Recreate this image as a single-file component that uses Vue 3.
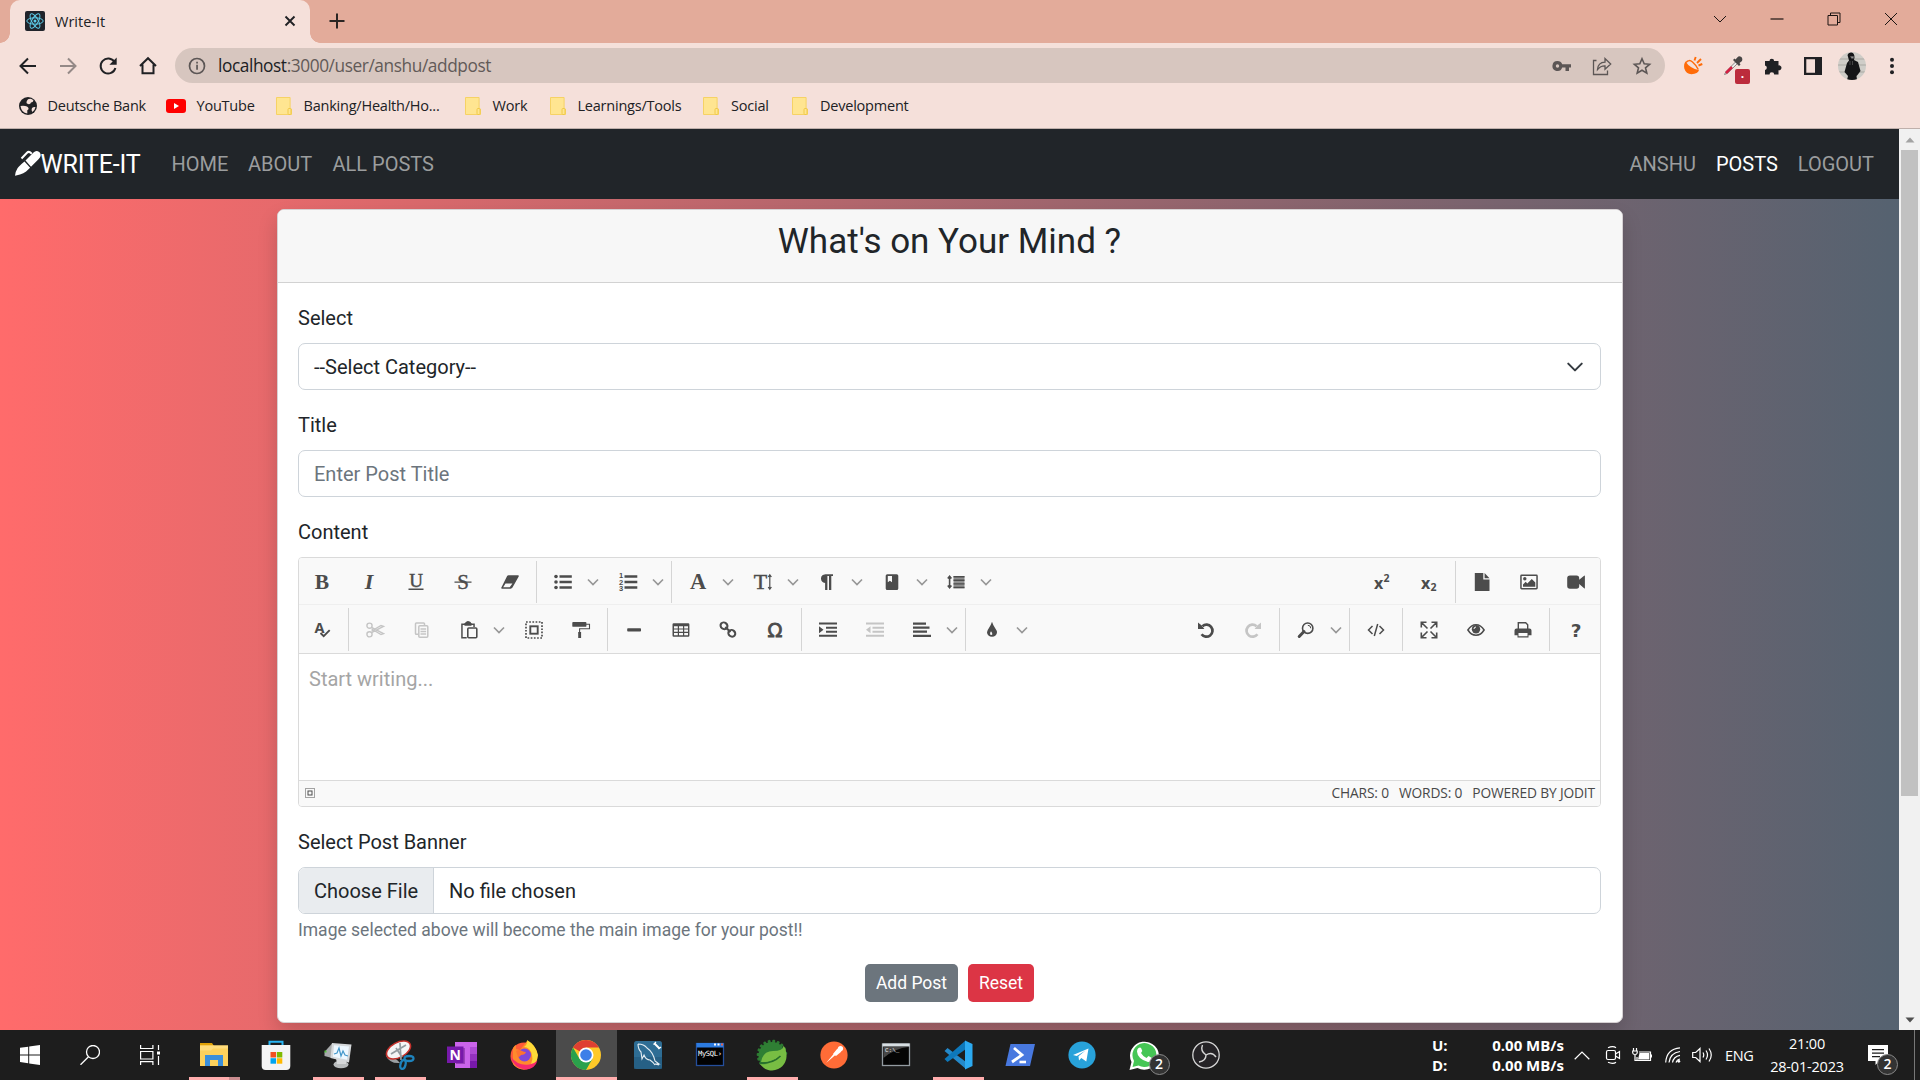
<script setup>
const bookmarks = [
  { label: 'Deutsche Bank', icon: 'globe', width: 148, gap: 9.5 },
  { label: 'YouTube', icon: 'youtube', width: 110, gap: 10.5 },
  { label: 'Banking/Health/Ho...', icon: 'folder', width: 189, gap: 11.5 },
  { label: 'Work', icon: 'folder', width: 85, gap: 11.5 },
  { label: 'Learnings/Tools', icon: 'folder', width: 153, gap: 11.5 },
  { label: 'Social', icon: 'folder', width: 89, gap: 12 },
  { label: 'Development', icon: 'folder', width: 120, gap: 12 },
]

const serif = 'font-family="Liberation Serif, serif" text-anchor="middle"'
const icons = {
  bold: `<text x="9" y="15.6" ${serif} font-size="21.5" font-weight="700">B</text>`,
  italic: `<text x="9" y="15.6" ${serif} font-size="22" font-weight="700" font-style="italic">I</text>`,
  underline: `<text x="9" y="13.6" ${serif} font-size="19" stroke="currentColor" stroke-width=".5">U</text><path d="M1.5 15.6h15v1.3h-15z"/>`,
  strike: `<text x="9" y="15.6" ${serif} font-size="21" stroke="currentColor" stroke-width=".4">S</text><path d="M.5 8.6h17v1.2H.5z"/>`,
  eraser: '<path d="M7.5 2.2h9.4q1.4 0 .8 1.3L11.5 14.600q-.7 1.100-1.800 1.100H1.200q-1.500-.1-.8-1.300L6 3.200q.5-1 1.500-1zM2.200 14.300h6.500l2.700-3.700H4.500z" fill-rule="evenodd"/>',
  ul: '<circle cx="2" cy="3.500" r="1.800"/><circle cx="2" cy="9" r="1.800"/><circle cx="2" cy="14.500" r="1.800"/><path d="M5.500 2.200h12.300v2.600H5.500zM5.500 7.700h12.300v2.600H5.500zM5.500 13.200h12.300v2.600H5.500z"/>',
  ol: '<path d="M5.500 2.200h12.800v2.600H5.500zM5.500 7.700h12.800v2.600H5.500zM5.500 13.200h12.800v2.600H5.500z"/><g font-family="Liberation Sans" font-size="7.500" font-weight="700"><text x="0" y="5">1</text><text x="0" y="11.500">2</text><text x="0" y="18">3</text></g>',
  font: `<text x="9" y="16" ${serif} font-size="22.500" font-weight="700">A</text>`,
  fontsize: `<text x="6.500" y="16" ${serif} font-size="22" stroke="currentColor" stroke-width=".5">T</text><path d="M15.800 2.500v13M14.200 4l1.600-2.300L17.400 4M14.200 14l1.600 2.300 1.600-2.300" stroke="currentColor" stroke-width="1.200" fill="none"/>`,
  paragraph: '<path d="M15 1.200v1.700h-1.700V17H11V2.900H9.400V17H7.100V10Q3 9.600 3 5.600T7.500 1.200z"/>',
  background: '<path d="M4.300 1.200h9.400q1.600 0 1.600 1.600v12.600q0 1.600-1.600 1.600H4.300q-1.600 0-1.600-1.600V2.800q0-1.600 1.600-1.600zM4.800 3v6.200l2.100-1.500L9 9.200V3z" fill-rule="evenodd"/>',
  lineheight: '<path d="M6.500 3h11v12.200h-11z" opacity=".6"/><path d="M6.500 3h11v1.500h-11zM6.500 6.600h11v1.300h-11zM6.500 10.200h11v1.300h-11zM6.500 13.700h11v1.500h-11z"/><path d="M2.600 4v10M.8 5.600l1.800-2.300 1.800 2.300M.8 12.400l1.800 2.300 1.800-2.300" stroke="currentColor" stroke-width="1.600" fill="none"/>',
  sup: '<g font-family="Open Sans, sans-serif" font-weight="700"><text x="1" y="15.500" font-size="16">x</text><text x="10.500" y="8.500" font-size="10.500">2</text></g>',
  sub: '<g font-family="Open Sans, sans-serif" font-weight="700"><text x="1" y="15.500" font-size="16">x</text><text x="10.500" y="18" font-size="10.500">2</text></g>',
  file: '<path d="M1.800 0h8.500v6.500h6.200V18H1.800zM11.600 0l4.900 5.200h-4.900z"/>',
  image: '<path d="M1.600 1.500h14.800q1.400 0 1.400 1.400v12.200q0 1.400-1.400 1.400H1.600q-1.400 0-1.400-1.400V2.900q0-1.400 1.400-1.400zM1.700 3v12h14.600V3z" fill-rule="evenodd"/><circle cx="4.800" cy="5.700" r="1.700"/><path d="M3 13.700v-2.200l2.700-2.700L7.300 10.400l4.500-4.500L15.300 9.500v4.200z"/>',
  video: '<path d="M3 2.500h6.500q2.700 0 2.700 2.800v1.500l5.200-4.400q.5 0 .5.600v12q0 .6-.5.600L12.200 11v2q0 2.700-2.700 2.700H3Q.2 15.700.2 13V5.300Q.2 2.500 3 2.500z"/>',
  spell: '<text x="1.500" y="12.200" font-family="Open Sans, sans-serif" font-size="14.500" font-weight="700">A</text><path d="M7.500 12l3.200 3.200 6-6" fill="none" stroke="currentColor" stroke-width="1.900"/>',
  cut: '<g fill="none" stroke="currentColor" stroke-width="1.400"><circle cx="3.500" cy="4.700" r="2.600"/><circle cx="3.500" cy="13.300" r="2.600"/><path d="M5.500 6.300l12 6.400-2.500.8L5.600 8M5.500 11.700l12-6.400-2.500-.8L5.600 10"/></g>',
  copy: '<g fill="none" stroke="currentColor" stroke-width="1.500"><path d="M5.500 13.300H3.300q-.8 0-.8-.8V2.800q0-.8.800-.8h7.400q.8 0 .8.800V4"/><rect x="5.800" y="4.700" width="9" height="11.600" rx="1"/><path d="M7.500 8h5.600M7.500 10.500h5.600M7.500 13h5.600"/></g>',
  paste: '<path d="M1.200 2.500h3.300Q6.800-1 9 .3q1.800.4 2.500 2.200h3.300V6h-1.500V4H2.700v12h4v1.600H1.200z" fill-rule="evenodd"/><path d="M4.500 2.200h7v2.600h-7z"/><rect x="7.800" y="7" width="9" height="9.800" rx="1" fill="#f9f9f9" stroke="currentColor" stroke-width="1.600"/>',
  selectall: '<rect x="1" y="1" width="16" height="16" fill="none" stroke="currentColor" stroke-width="1.700" stroke-dasharray="1.700 1.500"/><rect x="5.300" y="5.300" width="7.400" height="7.400" fill="none" stroke="currentColor" stroke-width="1.900"/>',
  brush: '<path d="M.3 1.700Q.3.900 1.200.900H13.500q.9 0 .9.800v3.200q0 .9-.9.900H1.200q-.9 0-.9-.9zM6.200 11h2.900v6H6.200z"/><path d="M14 3.200h3.500v4.600H7.600V11" fill="none" stroke="currentColor" stroke-width="1.100"/>',
  hr: '<rect x="2.200" y="7.200" width="13.800" height="3.300" rx=".8"/>',
  table: '<path d="M1.700 2.300h14.500q1.200 0 1.200 1.200v11q0 1.200-1.200 1.200H1.700q-1.200 0-1.200-1.200v-11q0-1.200 1.200-1.200zM2 5.200v2.200h3.800V5.200zm5 0v2.200h4V5.200zm5.200 0v2.200H16V5.200zM2 8.600v2.200h3.800V8.600zm5 0v2.200h4V8.600zm5.200 0v2.200H16V8.600zM2 12v2.300h3.800V12zm5 0v2.300h4V12zm5.200 0v2.300H16V12z" fill-rule="evenodd"/>',
  link: '<g fill="none" stroke="currentColor" stroke-width="2.100"><ellipse cx="5" cy="4.800" rx="3.600" ry="3.200" transform="rotate(40 5 4.800)"/><ellipse cx="12.800" cy="12.300" rx="3.600" ry="3.200" transform="rotate(40 12.800 12.300)"/><path d="M6.300 6.100l5.200 5"/></g>',
  omega: '<text x="9" y="16" font-family="DejaVu Sans, sans-serif" font-size="19.500" stroke="currentColor" stroke-width=".8" text-anchor="middle">Ω</text>',
  indent: '<path d="M0 1.500h18v2H0zM7 5.700h11v2.100H7zM7 9.700h11v2.100H7zM0 13.700h18v2.100H0zM0 5.300l4.500 3.500L0 12.300z"/>',
  outdent: '<path d="M0 1.500h18v2H0zM6.500 5.700H18v2.100H6.500zM6.500 9.700H18v2.100H6.500zM0 13.700h18v2.100H0zM4.500 5.300L0 8.800l4.500 3.500z"/>',
  align: '<path d="M0 1.500h13v2.200H0zM0 5.500h16.500v2.200H0zM0 9.600h14v2.200H0zM0 13.700h18v2.200H0z"/>',
  drop: '<path d="M9 .7Q10 4 12.200 7.200T14 11.300a5 4.500 0 0 1-10 0Q4 9.600 5.800 7.200T9 .7zm-1 9.500q-1.500 2-.7 3.200t2 .2q.6-1.100-1.300-3.400z" fill-rule="evenodd"/>',
  undo: '<path d="M5.500 5.200A6 6 0 1 1 4.600 13.200" fill="none" stroke="currentColor" stroke-width="2.700"/><path d="M1 1.500l1.500 1.300 2 1.500L7.400 8H1z"/>',
  redo: '<path d="M12.500 5.200A6 6 0 1 0 13.400 13.200" fill="none" stroke="currentColor" stroke-width="2.700"/><path d="M17 1.500l-1.500 1.300-2 1.500L10.600 8H17z"/>',
  search: '<circle cx="10.700" cy="7.200" r="5.200" fill="none" stroke="currentColor" stroke-width="1.600"/><path d="M7 10.500l-4.800 5" stroke="currentColor" stroke-width="3" stroke-linecap="round"/><path d="M10.800 4.300a3 3 0 0 1 3 3" fill="none" stroke="currentColor" stroke-width="1"/>',
  code: '<path d="M5.500 5L1.500 9l4 4M12.500 5l4 4-4 4M10.700 3l-3.400 12" fill="none" stroke="currentColor" stroke-width="1.500"/>',
  full: '<path d="M1.300 6.500V1.300h5.200M11.500 1.300h5.200v5.200M16.700 11.500v5.200h-5.200M6.500 16.700H1.300v-5.200M1.500 1.500l6 6M16.500 1.500L10.500 7.500M16.500 16.500L10.500 10.500M1.500 16.500L7.500 10.500" fill="none" stroke="currentColor" stroke-width="1.600"/>',
  eye: '<path d="M.9 9q3.200-5.200 8.100-5.200T17.100 9q-3.200 5.200-8.100 5.200T.9 9z" fill="none" stroke="currentColor" stroke-width="1.500"/><circle cx="9" cy="8.300" r="4.200"/><path d="M7 8a2 2 0 0 1 2-2" stroke="#f9f9f9" fill="none"/>',
  print: '<path d="M4.300 8V1.700h7.400l2 2V8" fill="none" stroke="currentColor" stroke-width="1.400"/><path d="M2.500 7.500h13q2 0 2 2v4.800h-3v2.300h-11v-2.300h-3V9.500q0-2 2-2zM4.500 12v3.300h9V12z" fill-rule="evenodd"/>',
  help: '<text x="9" y="16" font-family="DejaVu Sans, sans-serif" font-size="18.500" font-weight="700" text-anchor="middle">?</text>',
}

const row1Left = [['bold', 'italic', 'underline', 'strike', 'eraser'], ['ul+', 'ol+'], ['font+', 'fontsize+', 'paragraph+', 'background+', 'lineheight+']]
const row1Right = [['sup', 'sub'], ['file', 'image', 'video']]
const row2Left = [['spell'], ['cut-', 'copy-', 'paste+', 'selectall', 'brush'], ['hr', 'table', 'link', 'omega'], ['indent', 'outdent-', 'align+'], ['drop+']]
const row2Right = [['undo', 'redo-'], ['search+'], ['code'], ['full', 'eye', 'print'], ['help']]
const rows = [[row1Left, row1Right], [row2Left, row2Right]].map((row) =>
  row.map((side) => side.map((group) => group.map((n) => ({
    name: n.replace(/[+-]$/, ''), menu: n.endsWith('+'), off: n.endsWith('-'),
  })))))

const gearTeeth = Array.from({ length: 12 }, (_, i) => `<rect x="14" y="-.3" width="3" height="4" rx="1" transform="rotate(${-128 + i * 19} 15 15)"/>`).join('')
const apps = [
  { name: 'explorer', run: 'multi', art: '<path d="M1 3h12l2 3h-14z" fill="#e0a106"/><path d="M1 5.500h28V26H1z" fill="#fdd15c"/><path d="M1 5.500h28v3H14l-2 2H1z" fill="#ffdc7b"/><path d="M6 15h18v11h-5v-6h-8v6H6z" fill="#3b8fdb"/>' },
  { name: 'store', art: '<path d="M8.500 6V1.700h13V6" fill="none" stroke="#29b5f3" stroke-width="2"/><path d="M.7 5h28.600v21q0 4-4 4H4.700q-4 0-4-4z" fill="#f4f4f4"/><path d="M9.500 12H15v5.500H9.500z" fill="#f25022"/><path d="M15.800 12h5.500v5.500h-5.500z" fill="#7fba00"/><path d="M9.500 18.200H15v5.500H9.500z" fill="#00a4ef"/><path d="M15.800 18.200h5.500v5.500h-5.500z" fill="#ffb900"/>' },
  { name: 'monitor', run: 'yes', art: '<path d="M1.500 12L9 3.500v14.500l-7.500-2z" fill="#a7aaab"/><path d="M1.500 10.500h2v2h-2z" fill="#54c03c"/><ellipse cx="18" cy="24.500" rx="7.500" ry="3.800" fill="#b9bcbd"/><path d="M13 18l10 2v4H14z" fill="#d6d8d9"/><path d="M9 3l19.500 1.500-2.500 18L7.500 18z" fill="#d5d8da"/><path d="M11 5.200l15 1.200-2 13.300-14-3z" fill="#eef8ff"/><path d="M11 14l3-1 2-5 2 8 2-5 2 4 3 1" stroke="#4497ca" stroke-width="1.200" fill="none"/>' },
  { name: 'snip', run: 'yes', art: '<path d="M1 16q10 1 14 7-10 1-14-7z" fill="#9b9fa2"/><ellipse cx="13.500" cy="10" rx="13" ry="7.500" transform="rotate(-28 13.500 10)" fill="#f4f5f6" stroke="#c5312c" stroke-width="1.600"/><path d="M6 14l15-9M15 3l1 17M11 8l6 9" stroke="#939ba0" stroke-width="1.700"/><g fill="none" stroke="#1e83bd" stroke-width="2.300"><ellipse cx="24" cy="18.500" rx="4.500" ry="2.500"/><ellipse cx="18" cy="24.500" rx="2.500" ry="4.500" transform="rotate(15 18 24.500)"/></g>' },
  { name: 'onenote', art: '<path d="M8 2h22v26H8z" fill="#ca64ea"/><path d="M23 7h7v7h-7z" fill="#ae4bd5"/><path d="M23 14h7v7h-7z" fill="#9332bf"/><path d="M23 21h7v7h-7z" fill="#7719aa"/><path d="M9 8h9v16H9z" fill="#9b42ba"/><path d="M0 6.500h16.500V23H0z" fill="#7719aa"/><text x="8.200" y="20" text-anchor="middle" font-family="Open Sans" font-size="14" font-weight="700" fill="#fff">N</text>' },
  { name: 'firefox', art: '<circle cx="15" cy="16" r="13.500" fill="#ff5a38"/><path d="M4 8q2-3 3-3v4l4 1 7-9q7 3 10 12 1 12-9 16-10 2-15-5z" fill="#ff8a2c"/><path d="M18 0q9 5 11 15-1 12-12 14 8-6 6-14t-8-8q4-3 3-7z" fill="#ffda38"/><path d="M2 17q3 12 16 12.500 8-1 10.500-9-3 3-8 4-11 2-18.500-7.500z" fill="#f72a6c"/><circle cx="15.500" cy="15" r="6.500" fill="#7f47db"/><path d="M7 11q3-2 6 0 2 1 4 1-1 3-5 3-1 2-3 2z" fill="#ff7330"/>' },
  { name: 'chrome', run: 'active', art: '<circle cx="15" cy="15" r="15" fill="#ffc928"/><path d="M15 15L2 7.500A15 15 0 0 1 28 7.500H15z" fill="#df3f32"/><path d="M15 15L8.500 18.700 2 7.500A15 15 0 0 0 15 30l6.500-11.300z" fill="#2aa14c"/><circle cx="15" cy="15" r="7.500" fill="#fff"/><circle cx="15" cy="15" r="5.800" fill="#3d7fe8"/>' },
  { name: 'workbench', art: '<rect x="1" y="1" width="28" height="28" rx="2.500" fill="#2e6d94"/><path d="M1 17h28v12H1z" fill="#22597c" opacity=".6"/><path d="M5 4q6 0 9 4 6 4 8 13l4 3h-4l4 1M5 4q0 5 3 8l1 7 2-4q2 5 6 5 3 2 5 5" fill="none" stroke="#e5edf2" stroke-width="1.100"/><path d="M21.500 3.500l5 5" stroke="#fff" stroke-width="2"/><path d="M20.500 4.500l2.500-2.500M25.500 9l2.500-2" stroke="#fff" stroke-width="1.200"/>' },
  { name: 'mysql', art: '<rect x="1.500" y="3.500" width="27" height="22" fill="#020202" stroke="#244e9b" stroke-width="1.300"/><path d="M1.500 3h27v4.500h-27z" fill="#2c7be0"/><path d="M19 4.500h2M22.500 4.500h2" stroke="#fff" stroke-width="2"/><path d="M26 4.500h2" stroke="#e56448" stroke-width="2"/><text x="3" y="15.500" font-family="DejaVu Sans Mono" font-size="7.200" textLength="24" fill="#fff">MySQL›</text>' },
  { name: 'spring', run: 'yes', art: `<g fill="#2c7a31">${gearTeeth}</g><circle cx="15" cy="15.500" r="13.500" fill="#2f7f34"/><path d="M29 12a14.500 14.500 0 0 1-26 12q10 1 17-4 7-4 6-14 3 2 3 6z" fill="#78bd43"/><path d="M4 22Q6 11 16 11t11-5q3 10-3 15-8 5-16 2 9-1 15-7-9 7-19 6z" fill="#78bd43"/><path d="M3.500 23q12 1 20-7" stroke="#276c2b" stroke-width="1.500" fill="none"/>` },
  { name: 'postman', art: '<circle cx="15" cy="15" r="13.600" fill="#ff6c37"/><path d="M7 23L18 10l2 2z" fill="#fff"/><path d="M14 14l4.500-5.500 4 3-5.500 4.500z" fill="#fff"/><circle cx="21.500" cy="8.500" r="2.600" fill="#fff"/>' },
  { name: 'cmd', art: '<rect x="1.500" y="4" width="27" height="21.500" fill="#050505" stroke="#939ba1" stroke-width="1.300"/><path d="M1.500 3.500h27v3h-27z" fill="#d7dee2"/><path d="M2.500 7h25q-13 1-25 11z" fill="#484848"/><text x="4" y="12" font-family="Liberation Mono" font-size="6" fill="#eee">C:\\_</text>' },
  { name: 'vscode', run: 'yes', art: '<path d="M23 1v28L1.500 11l3-3L23 22z" fill="#2489ca"/><path d="M22 1L1.500 19l3 3L23 9z" fill="#0d78bb"/><path d="M22 .5l7.500 3.500v22L22 29.500z" fill="#2caaf1"/>' },
  { name: 'powershell', art: '<path d="M5.500 4H30l-5 22H.5z" fill="#4878df"/><path d="M9 8l8 7-10 7" stroke="#fff" stroke-width="2.800" fill="none"/><path d="M14.500 22H21" stroke="#fff" stroke-width="2.600"/>' },
  { name: 'telegram', art: '<circle cx="15" cy="15" r="13.600" fill="#28a2da"/><path d="M6 15l15.500-6.500-2.200 13-5-3.500-2.300 2.500-.5-4.300 7-5.700-8.700 5.500z" fill="#fff"/>' },
  { name: 'whatsapp', badge: 2, art: '<path d="M.5 30l2-8a14.500 14 0 1 1 6 6z" fill="#fff"/><path d="M3.500 27l1.500-6a12 12 0 1 1 4.500 4.500z" fill="#45c655"/><path d="M9.500 8q2-1 2.800.5l1 2.500-1.300 2q2 3.500 5.500 5l2-2 3.500 2q0 4-4 4Q8.500 19 8 11.500 8 9 9.500 8z" fill="#fff"/>' },
  { name: 'obs', art: '<circle cx="15" cy="15" r="13.200" fill="#252326" stroke="#d6d6d6" stroke-width="1.300"/><g fill="none" stroke="#d6d6d6" stroke-width="1.400"><path d="M15 15q-6-4-3.500-10M15 15q6-4 10 2M15 15q0 6-7 7"/></g>' },
]
</script>

<template>
  <div class="screen">
    <header class="browser">
      <div class="tabstrip">
        <div class="tab">
          <svg class="react" viewBox="0 0 20 20"><rect width="20" height="20" rx="2" fill="#20232a" /><g fill="none" stroke="#5ccbe8" stroke-width="1"><ellipse cx="10" cy="10" rx="8.200" ry="3.200" /><ellipse cx="10" cy="10" rx="8.200" ry="3.200" transform="rotate(60 10 10)" /><ellipse cx="10" cy="10" rx="8.200" ry="3.200" transform="rotate(120 10 10)" /></g><circle cx="10" cy="10" r="1.500" fill="#5ccbe8" /></svg>
          <span class="tab-title">Write-It</span>
          <svg class="tab-close" viewBox="0 0 12 12"><path d="M1.500 1.500l9 9m0-9l-9 9" stroke="#202124" stroke-width="1.900" /></svg>
        </div>
        <svg class="newtab" viewBox="0 0 16 16"><path d="M8 .5v15M.5 8h15" stroke="#2b2523" stroke-width="2" /></svg>
        <div class="window-controls">
          <svg viewBox="0 0 14 14"><path d="M1 4l6 6 6-6" /></svg>
          <svg viewBox="0 0 14 14"><path d="M.5 7h13" stroke-width="1.200" /></svg>
          <svg viewBox="0 0 14 14"><path d="M1 3.500h9.500V13H1zM3.500 3.500V1H13v9.500h-2.500" /></svg>
          <svg viewBox="0 0 14 14"><path d="M1 1l12 12M13 1L1 13" /></svg>
        </div>
      </div>
      <div class="toolbar">
        <div class="nav-icons">
          <svg viewBox="0 0 20 20"><path d="M18 10H3M10 2.500L2.500 10l7.500 7.500" /></svg>
          <svg viewBox="0 0 20 20" class="dim"><path d="M2 10h15M10 2.500l7.500 7.500-7.500 7.500" /></svg>
          <svg viewBox="0 0 20 20"><path d="M16.500 6A7.500 7.500 0 1 0 17.400 12" /><path d="M18.700 1.500v7.300h-7.300z" fill="#202124" stroke="none" /></svg>
          <svg viewBox="0 0 20 20"><path d="M2 10l8-7.800 8 7.800M4.500 8.500v8.800h11V8.500" /></svg>
        </div>
        <div class="omnibox">
          <svg class="info" viewBox="0 0 18 18"><circle cx="9" cy="9" r="7.500" fill="none" stroke="#5c5655" stroke-width="1.700" /><path d="M8.200 7.700h1.700v5H8.200zM8.200 4.800h1.700v1.700H8.200z" fill="#5c5655" /></svg>
          <span class="url"><b>localhost</b>:3000/user/anshu/addpost</span>
          <div class="omni-icons">
            <svg viewBox="0 0 20 20"><path d="M5.500 5a5 5 0 1 0 4.700 6.500h3.300V15H17v-3.500h2V8.300H10.200A5 5 0 0 0 5.500 5zm0 3.300a1.700 1.700 0 1 1 0 3.400 1.700 1.700 0 0 1 0-3.400z" fill="#5c5655" fill-rule="evenodd" /></svg>
            <svg viewBox="0 0 20 20"><path d="M4.500 4.500H1.500V18.500h14v-4M5.500 13.500Q6 6.500 13 6.200V2.500L18.700 8 13 13.200V9.800Q8.500 9.700 5.500 13.500z" fill="none" stroke="#5c5655" stroke-width="1.300" /></svg>
            <svg viewBox="0 0 20 20"><path d="M10 2.800l2.200 5 5.400.5-4.100 3.500 1.300 5.300-4.800-2.900-4.800 2.900 1.300-5.300-4.100-3.500 5.400-.5z" fill="none" stroke="#5c5655" stroke-width="1.600" /></svg>
          </div>
        </div>
        <div class="extensions">
          <svg viewBox="0 0 20 20"><path d="M2.500 5.500Q.5 8 1.300 12.500 3 18 8.500 18.200q6.500-.2 7.500-4.200-9-1.500-13.500-8.500z" fill="#ff6b08" /><path d="M3 6.500Q6 3 9.500 6t5.800 7.500" fill="none" stroke="#ff6b08" stroke-width="1.500" /><path d="M11.500 4.500l1.200-3.500M14 7l4-4M15.500 9.500l3.800-1.500" stroke="#ff6b08" stroke-width="1.900" /></svg>
          <div class="picker">
            <svg viewBox="0 0 20 20"><path d="M13 5.500L3 15.500l-1.500 3 3-1.200L14.500 7.500z" fill="#eee" stroke="#8b8584" /><path d="M9 11l-6 6" stroke="#d51f42" stroke-width="2.500" /><path d="M10 4l6 6 1.500-1.500-1-1.500 2.500-2Q20 2 18 .8T14.500 1.200L12.500 3.500 11.500 2.500z" fill="#484545" /></svg>
            <span>.</span>
          </div>
          <svg viewBox="0 0 20 20"><path d="M2 5h4.500a2.300 2.300 0 1 1 4.600 0h4.400v4.400a2.500 2.500 0 1 1 0 4.900v4.200h-4.300a2.300 2.300 0 0 0-4.700 0H2v-4.600a2.300 2.300 0 0 0 0-4.500z" fill="#202124" /></svg>
          <svg viewBox="0 0 20 20"><path d="M1 1h18v18H1zM3.300 3.300v13.400H12V3.300z" fill="#202124" fill-rule="evenodd" /></svg>
          <svg class="avatar" viewBox="0 0 28 28"><defs><clipPath id="face"><circle cx="14" cy="14" r="14" /></clipPath></defs><g clip-path="url(#face)"><path d="M0 0h28v28H0z" fill="#cfcdc8" /><path d="M0 7h28M0 13h28M0 20h28" stroke="#aaa9a3" /><path d="M9.500 3q1-3 4-2.500t3 5l-.5 2.500 4 2 2.500 9-3 4-1 1 .5 4H9l1-4-3.500-4 2.500-9 2-2.500z" fill="#141517" /><path d="M12.500 4.500h3v1.800h-2zM12 9v4M14.500 9v4" fill="#999" stroke="#666" stroke-width=".6" /></g></svg>
          <svg viewBox="0 0 20 20"><g fill="#202124"><circle cx="9" cy="3.800" r="2" /><circle cx="9" cy="10" r="2" /><circle cx="9" cy="16.200" r="2" /></g></svg>
        </div>
      </div>
      <div class="bookmarks">
        <div v-for="b in bookmarks" :key="b.label" class="bookmark" :style="{ width: b.width + 'px', gap: b.gap + 'px' }">
          <svg v-if="b.icon === 'globe'" width="20" height="20" viewBox="0 0 20 20"><circle cx="10" cy="10" r="9" fill="#202124" /><path d="M10 3.200q3.500-1.200 5.500 1.200-.5 2-2.500 2-.5 2.300-3 1.700-2-.3-1.500-2 .2-1.500 1.500-2.900zM2.500 10q4-.5 6.500.5 3 2 .3 3.800v3.200Q3.500 17 2.500 10zM14 12q1.500-1.500 3.500-1-.6 3.500-3.200 5-1.300-2-.3-4z" fill="#f5e0da" /></svg>
          <svg v-else-if="b.icon === 'youtube'" width="20" height="14" viewBox="0 0 20 14"><rect width="20" height="14" rx="3" fill="#f00" /><path d="M8 4l5 3-5 3z" fill="#fff" /></svg>
          <svg v-else width="16" height="18" viewBox="0 0 16 18"><path d="M.5.500h13.600v11l1.400.5v5.500H.5z" fill="#ffe591" stroke="#f6d265" /><rect x="12" y="11.500" width="3" height="6" rx="1" fill="#ffe591" stroke="#f0c948" /></svg>
          <span>{{ b.label }}</span>
        </div>
      </div>
    </header>

    <div class="viewport">
      <main class="page">
        <nav class="navbar">
          <a class="brand">
            <svg viewBox="0 0 26 26"><path d="M10.500 10.500L18.500 2.500Q20.500.3 23 1.200 26.300 2.500 25.600 6 25.300 7.500 23.500 9.300L16 16.800zM9.500 11.500l5.600 6.200-4 3.700Q8.500 23.500 5 24.500l-5 1.200q.5-4.500 2.500-7.500 1.500-2.200 7-6.700z" fill="#fff" /><path d="M6.500 8.500l5.500-5.800q1.500-1.500 3.200-.3l1.600 1.300" fill="none" stroke="#fff" stroke-width="2" /></svg><span>WRITE-IT</span>
          </a>
          <a class="home">HOME</a><a class="about">ABOUT</a><a>ALL POSTS</a>
          <div class="right"><a>ANSHU</a><a class="posts">POSTS</a><a>LOGOUT</a></div>
        </nav>
        <section class="card">
          <div class="card-header"><h3>What's on Your Mind ?</h3></div>
          <div class="card-body">
            <label>Select</label>
            <div class="control select"><span>--Select Category--</span><svg viewBox="0 0 16 16"><path d="M2 5l6 6 6-6" fill="none" stroke="#343a40" stroke-width="1.800" stroke-linecap="round" stroke-linejoin="round" /></svg></div>
            <label>Title</label>
            <div class="control placeholder">Enter Post Title</div>
            <label>Content</label>
            <div class="editor">
              <div v-for="(row, r) in rows" :key="r" class="tool-row">
                <div v-for="(side, s) in row" :key="s" class="side">
                  <div v-for="(group, g) in side" :key="g" class="group">
                    <div v-for="t in group" :key="t.name" class="tool" :class="{ off: t.off, menu: t.menu }">
                      <svg class="glyph" viewBox="0 0 18 18" fill="currentColor" v-html="icons[t.name]" />
                      <svg v-if="t.menu" class="caret" viewBox="0 0 12 8"><path d="M1 1.500l5 5 5-5" fill="none" stroke="#989898" stroke-width="1.700" /></svg>
                    </div>
                  </div>
                </div>
              </div>
              <div class="writing">Start writing...</div>
              <div class="status">
                <svg viewBox="0 0 10 10" fill="none" stroke="#4c4c4c"><rect x=".5" y=".5" width="9" height="9" stroke-dasharray="1 1" /><rect x="3" y="3" width="4" height="4" /></svg>
                <div><span>CHARS: 0</span><span>WORDS: 0</span><span>POWERED BY JODIT</span></div>
              </div>
            </div>
            <label>Select Post Banner</label>
            <div class="control file"><span class="choose">Choose File</span><span class="chosen">No file chosen</span></div>
            <div class="hint">Image selected above will become the main image for your post!!</div>
            <div class="actions"><button class="add">Add Post</button><button class="reset">Reset</button></div>
          </div>
        </section>
      </main>
      <aside class="scrollbar"><svg viewBox="0 0 10 6"><path d="M5 .5L9.500 5.500h-9z" fill="#a3a3a3" /></svg><div class="thumb" /><svg viewBox="0 0 10 6"><path d="M5 5.500L9.500.500h-9z" fill="#505050" /></svg></aside>
    </div>

    <footer class="taskbar">
      <div class="sys"><svg viewBox="0 0 20 20"><path d="M0 2.800L8.200 1.700v7.700H0zM9.200 1.500L20 0v9.400H9.200zM0 10.400h8.200v7.800L0 17.100zM9.200 10.400H20V20L9.200 18.400z" fill="#fff" /></svg></div>
      <div class="sys"><svg viewBox="0 0 20 20" fill="none" stroke="#fff" stroke-width="1.300"><circle cx="13" cy="7" r="6.500" /><path d="M8.500 11.800L.5 19.800" /></svg></div>
      <div class="sys"><svg viewBox="0 0 20 20" fill="none" stroke="#fff" stroke-width="1.200"><path d="M.6 0v3.500h12.300V0M.6 20v-3.300h12.300V20M.6 6.500h12.300v7.500H.6zM18.500 0v5M18.500 11v9" /><path d="M17 6.500h3v3h-3z" fill="#fff" stroke="none" /></svg></div>
      <div class="apps">
        <div v-for="a in apps" :key="a.name" class="app" :class="a.run">
          <svg viewBox="0 0 30 30" v-html="a.art" />
          <span v-if="a.badge" class="badge">{{ a.badge }}</span>
        </div>
      </div>
      <div class="tray">
        <div class="speed"><div><span>U:</span><span>0.00 MB/s</span></div><div><span>D:</span><span>0.00 MB/s</span></div></div>
        <svg class="t1" viewBox="0 0 16 9"><path d="M.7 8.200L8 1l7.300 7.200" /></svg>
        <svg class="t2" viewBox="0 0 16 18"><rect x="1.500" y="4.500" width="9" height="9" rx="1.500" /><path d="M10.500 8l4-2.500v7l-4-2.500M3 1.700Q8-.5 11 1.700M3 16.300Q8 18.500 11 16.300" /></svg>
        <svg class="t3" viewBox="0 0 20 14"><path d="M7 4h11.500v8.500H5V9" /><path d="M7.500 5h9.800v6.500H6z" fill="#fff" stroke="none" /><path d="M1.500 0v3M4.500 0v3M.7 3h4.500v2Q5 6.500 3 6.500T.7 5zM3 6.500v6h2M19.500 6.500v3" /></svg>
        <svg class="t4" viewBox="0 0 16 16"><path d="M.7 15.500Q1.500 2 15 .8M4 15.500Q5 6 15 4.500M7.500 15.500Q8.500 9.500 15 8.300M11 15.500Q12 12.500 15 12" /><circle cx="13.800" cy="14.300" r="1.400" fill="#fff" stroke="none" /></svg>
        <svg class="t5" viewBox="0 0 20 16"><path d="M.7 5.500h3L8 1.500v13l-4.300-4h-3zM11 5.500q1.500 2.500 0 5M14 3.500q3 4.500 0 9M17 1.500q4.500 6.500 0 13" /></svg>
        <span class="lang">ENG</span>
        <div class="clock"><span>21:00</span><span>28-01-2023</span></div>
        <div class="notify"><svg viewBox="0 0 20 20"><path d="M0 0h20v16H11.500L7.500 20v-4H0z" fill="#fff" /><path d="M4 4.700h12M4 8.200h12M4 11.700h8" stroke="#1d1d1d" stroke-width="1.200" /></svg><span class="badge">2</span></div>
        <div class="desktop" />
      </div>
    </footer>
  </div>
</template>

<style>
body { margin: 0; overflow: hidden; }
</style>

<style scoped>
* { box-sizing: border-box; }
svg { display: block; flex: none; }
.screen { width: 1920px; height: 1080px; display: flex; flex-direction: column; overflow: hidden; font-family: "Roboto", sans-serif; color: #212529; white-space: nowrap; }

.browser { height: 129px; flex: none; background: #f5e0da; border-bottom: 1px solid #bfb0ab; font-family: "Open Sans", sans-serif; color: #202124; }
.tabstrip { height: 43px; background: #e3ab9a; display: flex; align-items: center; padding-left: 10px; }
.tab { position: relative; width: 300px; height: 43px; background: #f5e0da; border-radius: 10px 10px 0 0; display: flex; align-items: center; padding: 0 14px 1px 15px; }
.tab::before, .tab::after { content: ""; position: absolute; bottom: 0; width: 10px; height: 10px; }
.tab::before { left: -10px; background: radial-gradient(circle at 0 0, transparent 9.500px, #f5e0da 10px); }
.tab::after { right: -10px; background: radial-gradient(circle at 100% 0, transparent 9.500px, #f5e0da 10px); }
.react { width: 20px; height: 20px; }
.tab-title { margin-left: 10px; font-size: 14.500px; }
.tab-close { margin-left: auto; width: 12px; height: 12px; }
.newtab { width: 16px; height: 16px; margin-left: 19px; margin-bottom: 1px; }
.window-controls { margin-left: auto; display: flex; gap: 43px; padding: 0 22px 6px 0; }
.window-controls svg { width: 14px; height: 14px; fill: none; stroke: #1c1513; }
.toolbar { height: 45px; display: flex; align-items: center; }
.nav-icons { display: flex; gap: 20px; padding-left: 17.500px; width: 175px; }
.nav-icons svg { width: 20px; height: 20px; fill: none; stroke: #202124; stroke-width: 2; }
.nav-icons .dim { opacity: .45; }
.omnibox { width: 1490px; height: 35px; border-radius: 18px; background: #d7c6bf; display: flex; align-items: center; padding: 0 13px 0 13px; }
.info { width: 18px; height: 18px; }
.url { margin-left: 12px; font-size: 17.300px; letter-spacing: -.42px; color: #625a58; }
.url b { font-weight: 400; color: #202124; }
.omni-icons { display: flex; gap: 20px; margin-left: auto; }
.omni-icons svg { width: 20px; height: 20px; }
.extensions { display: flex; align-items: center; margin-left: 18px; gap: 20px; }
.extensions svg { width: 20px; height: 20px; }
.extensions .avatar { width: 28px; height: 28px; margin: 0 -3px 0 -5px; }
.picker { position: relative; }
.picker span { position: absolute; left: 12px; top: 13px; width: 15px; height: 15px; border-radius: 2px; background: #bc2c3c; color: #fff; font-size: 12px; line-height: 10px; font-weight: 700; text-align: center; }
.bookmarks { height: 36px; padding: 0 0 1px 18px; display: flex; align-items: center; font-size: 14.500px; letter-spacing: -.22px; }
.bookmark { display: flex; align-items: center; flex: none; }

.viewport { height: 901px; display: flex; }
.page { width: 1899px; background: linear-gradient(90deg, #ff6b6b, #556270); overflow: hidden; }
.navbar { height: 70px; background: #212529; display: flex; align-items: center; padding: 0 25px 0 15px; font-size: 20px; color: #9b9d9e; }
.brand { color: #fff; font-size: 25px; display: flex; align-items: center; width: 156.500px; }
.brand svg { width: 26px; height: 26px; margin-bottom: 2px; }
.brand span { letter-spacing: -.18px; margin-left: -.5px; }
.home { width: 76.500px; }
.about { width: 84.500px; }
.right { display: flex; gap: 20px; margin-left: auto; }
.posts { color: #fff; }
.card { width: 1346px; height: 814px; margin: 9.500px 0 0 276.500px; border: 1px solid #d6d1d3; border-radius: 7px; background: #fff; box-shadow: 0 10px 20px rgba(0, 0, 0, .16); }
.card-header { height: 73px; padding-top: 11px; border-bottom: 1px solid #d2d2d2; background: #f7f7f7; border-radius: 6px 6px 0 0; text-align: center; }
h3 { margin: 0; font-size: 35px; line-height: 42px; font-weight: 400; }
.card-body { padding: 20.500px; font-size: 20px; line-height: 30px; display: flex; flex-direction: column; }
label { margin-bottom: 10px; height: 30px; }
.control { height: 47px; margin-bottom: 20px; border: 1px solid #ced4da; border-radius: 7px; display: flex; align-items: center; padding: 0 15px; }
.select { justify-content: space-between; padding-right: 16px; }
.select svg { width: 18px; height: 18px; }
.placeholder { color: #6c757d; }
.editor { height: 249.500px; margin-bottom: 20px; border: 1px solid #dadada; border-radius: 4px; display: flex; flex-direction: column; overflow: hidden; }
.tool-row { height: 47px; flex: none; background: #f9f9f9; border-bottom: 1px solid #efefef; display: flex; justify-content: space-between; padding: 3px 0 1px; }
.tool-row + .tool-row { height: 49px; border-bottom-color: #dadada; padding: 3px 0 2px; }
.side { display: flex; }
.group { display: flex; }
.group + .group { border-left: 1px solid #d5d5d5; margin-left: 2px; padding-left: 3px; }
.tool { width: 47px; display: flex; align-items: center; justify-content: center; color: #4c4c4c; }
.tool.off { color: #c5c5c5; }
.tool.menu { width: 64.500px; justify-content: flex-start; padding-left: 14px; gap: 15px; }
.glyph { width: 18px; height: 18px; overflow: visible; margin-right: 1px; }
.menu .glyph { margin-right: 0; }
.caret { width: 12px; height: 8px; }
.writing { flex: 1; padding: 10px; color: #a5a5a5; line-height: 30px; }
.status { height: 26px; background: #f9f9f9; border-top: 1px solid #dadada; display: flex; align-items: center; justify-content: space-between; padding: 0 5px 1px 6px; font: 13.750px "Open Sans", sans-serif; color: #484848; }
.status svg { width: 10px; height: 10px; }
.status div { display: flex; gap: 10px; letter-spacing: -.14px; }
.file { padding: 0; height: 47.500px; margin-bottom: 3px; overflow: hidden; }
.choose { align-self: stretch; width: 135px; line-height: 46px; background: #e9ecef; border-right: 1px solid #ced4da; padding-left: 15px; margin-right: 15px; }
.chosen { padding-top: 1px; }
.hint { font-size: 17.500px; line-height: 26px; color: #6c757d; margin-bottom: 21px; }
.actions { display: flex; justify-content: center; gap: 10px; }
button { height: 38px; border: 0; border-radius: 5px; color: #fff; font: 17.500px "Roboto", sans-serif; padding: 0; }
.add { background: #6c757d; width: 93px; }
.reset { background: #dc3545; width: 66px; }
.scrollbar { width: 21px; background: #f1f1f1; display: flex; flex-direction: column; align-items: center; padding: 8px 0 7px; }
.scrollbar svg { width: 10px; height: 6px; }
.thumb { width: 17px; height: 646px; background: #c1c1c1; margin: 7px 0 auto; }

.taskbar { height: 50px; background: #1d1d1d; color: #fff; display: flex; font-family: "Open Sans", sans-serif; }
.sys { width: 60px; display: flex; align-items: center; justify-content: center; }
.sys svg { width: 20px; height: 20px; }
.apps { display: flex; padding-left: 2.500px; }
.app { width: 62px; position: relative; display: flex; align-items: center; justify-content: center; }
.app > svg { width: 30px; height: 30px; overflow: visible; }
.app::after { content: ""; position: absolute; bottom: 0; left: 6px; width: 51px; height: 3px; }
.yes::after { background: #ffadad; }
.multi::after { background: linear-gradient(90deg, #ffadad 40px, #ca8c8f 40px); }
.active { background: #4b4b4b; box-shadow: inset 1px 0 #1d1d1d; }
.active::after { left: 1px; width: 61px; background: #ffadad; }
.badge { position: absolute; width: 21px; height: 21px; border: 1px solid #8a8a8a; border-radius: 50%; background: #333; font-size: 14px; line-height: 18px; font-weight: 600; text-align: center; }
.app .badge { left: 36px; top: 24px; }
.tray { margin-left: auto; width: 488px; position: relative; display: flex; align-items: center; }
.tray > svg { fill: none; stroke: #fff; stroke-width: 1.200; }
.speed { width: 132px; font-size: 15px; line-height: 20px; font-weight: 700; }
.speed div { display: flex; justify-content: space-between; }
.t1 { width: 16px; height: 9px; margin-left: 10px; }
.t2 { width: 16px; height: 18px; margin-left: 15px; }
.t3 { width: 20px; height: 14px; margin-left: 11px; }
.t4 { width: 16px; height: 16px; margin-left: 13px; }
.t5 { width: 20px; height: 16px; margin-left: 11px; }
.lang { margin-left: 13px; width: 30px; font-size: 14.500px; letter-spacing: -.3px; }
.clock { display: flex; flex-direction: column; align-items: center; width: 78px; margin-left: 13px; padding-bottom: 1px; font-size: 14.500px; line-height: 23px; letter-spacing: -.2px; }
.notify { position: relative; margin-left: 22px; }
.notify svg { width: 20px; height: 20px; }
.notify .badge { left: 9px; top: 9px; }
.desktop { height: 50px; width: 1px; background: #777; margin-left: 26px; }
</style>
